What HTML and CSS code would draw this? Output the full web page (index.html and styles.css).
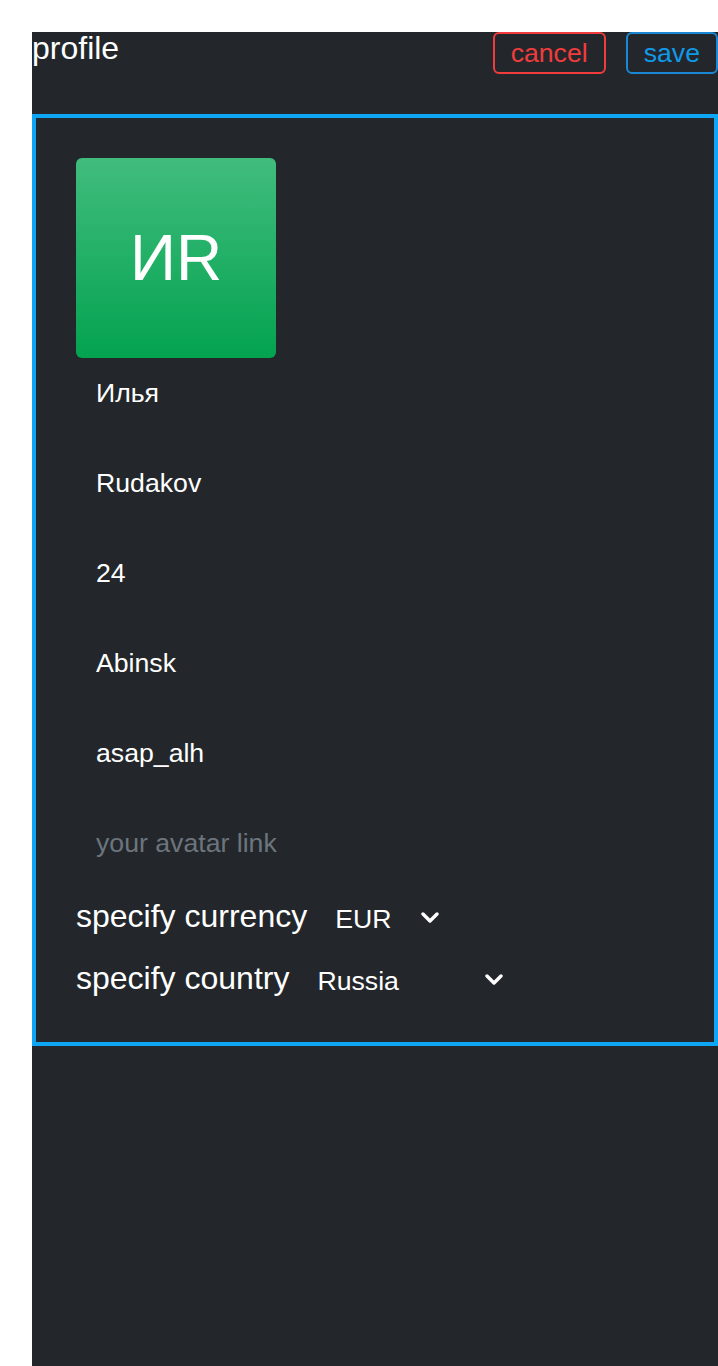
FILE: index.html
```html
<!DOCTYPE html>
<html lang="en">
<head>
<meta charset="utf-8">
<title>profile</title>
<link rel="stylesheet" href="styles.css">
</head>
<body>
<div class="page">
  <header class="header">
    <h1 class="title">profile</h1>
    <div class="actions">
      <button class="btn btn-cancel">cancel</button>
      <button class="btn btn-save">save</button>
    </div>
  </header>
  <section class="card">
    <div class="avatar">ИR</div>
    <div class="fields">
      <input class="field" type="text" value="Илья">
      <input class="field" type="text" value="Rudakov">
      <input class="field" type="text" value="24">
      <input class="field" type="text" value="Abinsk">
      <input class="field" type="text" value="asap_alh">
      <input class="field" type="text" placeholder="your avatar link">
    </div>
    <div class="row">
      <span class="label">specify currency</span>
      <div class="select-wrap select-currency">
        <select class="select">
          <option>EUR</option>
          <option>USD</option>
          <option>RUB</option>
        </select>
        <svg class="chevron" width="18" height="12" viewBox="0 0 18 12"><polyline points="2,2 9,9 16,2" fill="none" stroke="#fff" stroke-width="3.4" stroke-linecap="round" stroke-linejoin="round"/></svg>
      </div>
    </div>
    <div class="row">
      <span class="label">specify country</span>
      <div class="select-wrap select-country">
        <select class="select">
          <option>Russia</option>
          <option>Germany</option>
          <option>United States</option>
        </select>
        <svg class="chevron" width="18" height="12" viewBox="0 0 18 12"><polyline points="2,2 9,9 16,2" fill="none" stroke="#fff" stroke-width="3.4" stroke-linecap="round" stroke-linejoin="round"/></svg>
      </div>
    </div>
  </section>
</div>
</body>
</html>
```
FILE: styles.css
```css
html, body {
  margin: 0;
  padding: 0;
  background: #ffffff;
}

body {
  font-family: "Liberation Sans", Arial, sans-serif;
  color: #ffffff;
}

.page {
  margin: 32px 0 0 32px;
  background: #23272b;
  min-height: calc(100vh - 32px);
  box-sizing: border-box;
}

.header {
  display: flex;
  justify-content: space-between;
  align-items: flex-start;
  height: 82px;
}

.title {
  margin: 0;
  font-size: 32px;
  font-weight: normal;
  line-height: 1.05;
  color: #ffffff;
}

.actions {
  display: flex;
  gap: 20px;
}

.btn {
  height: 42px;
  padding: 0 16px;
  border: 2px solid;
  border-radius: 6px;
  background: transparent;
  font-family: "Liberation Sans", Arial, sans-serif;
  font-size: 26.67px;
  line-height: 1;
  cursor: pointer;
}

.btn-cancel {
  color: #f03c3c;
  border-color: #f03c3c;
}

.btn-save {
  color: #1199e8;
  border-color: #1a88d4;
}

.card {
  border: 4px solid #0ea5f5;
  padding: 40px;
  display: flex;
  flex-direction: column;
}

.avatar {
  width: 200px;
  height: 200px;
  border-radius: 6px;
  background: linear-gradient(180deg, #41bc7d 0%, #03a350 100%);
  display: flex;
  align-items: center;
  justify-content: center;
  font-size: 64px;
  color: #ffffff;
}

.fields {
  display: flex;
  flex-direction: column;
  gap: 20px;
}

.field {
  display: block;
  height: 70px;
  padding: 0 20px;
  border: none;
  outline: none;
  background: transparent;
  color: #ffffff;
  font-family: "Liberation Sans", Arial, sans-serif;
  font-size: 26.67px;
  box-sizing: border-box;
  width: 100%;
}

.field::placeholder {
  color: #6c757d;
}

.row {
  display: flex;
  align-items: center;
  height: 48px;
  margin-top: 14px;
}

.label {
  font-size: 32px;
  line-height: 1;
  margin-right: 16px;
}

.select-wrap {
  position: relative;
  display: flex;
  align-items: center;
  margin-top: 6px;
}

.select {
  appearance: none;
  -webkit-appearance: none;
  background: transparent;
  border: none;
  outline: none;
  color: #ffffff;
  font-family: "Liberation Sans", Arial, sans-serif;
  font-size: 26.67px;
  padding: 4px 12px;
  height: 40px;
}

.select option {
  color: #000;
}

.select-currency .select {
  width: 130px;
}

.select-country .select {
  width: 212px;
}

.chevron {
  position: absolute;
  right: 14px;
  top: 50%;
  margin-top: -7px;
  pointer-events: none;
}
```
